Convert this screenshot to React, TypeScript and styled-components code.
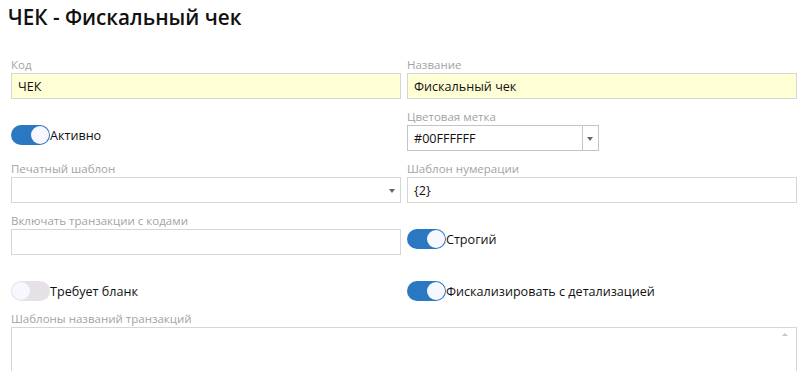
import styled, { createGlobalStyle } from 'styled-components';

const GlobalStyle = createGlobalStyle`
  body {
    margin: 0;
    background: #fff;
    font-family: 'Open Sans', 'Noto Sans', sans-serif;
    color: #111;
  }
`;

const Page = styled.div`
  width: 805px;
  height: 371px;
  overflow: hidden;
  box-sizing: border-box;
`;

const Title = styled.h1`
  margin: 0;
  padding: 4px 8px 0;
  height: 57px;
  box-sizing: border-box;
  font-size: 20.7px;
  font-weight: 600;
  line-height: 27px;
  color: #111;
`;

const Form = styled.div`
  display: grid;
  grid-template-columns: 390px 390px;
  column-gap: 6px;
  row-gap: 10px;
  padding: 0 8px 0 11px;
`;

const Field = styled.div<{ $wide?: boolean }>`
  display: flex;
  flex-direction: column;
  grid-column: ${(p) => (p.$wide ? '1 / -1' : 'auto')};
`;

const Label = styled.label`
  font-size: 11.5px;
  line-height: 16px;
  color: #a3a3a3;
  white-space: nowrap;
`;

const Input = styled.div<{ $filled?: boolean }>`
  position: relative;
  height: 26px;
  box-sizing: border-box;
  border: 1px solid #d6d6d6;
  background: ${(p) => (p.$filled ? '#ffffd6' : '#fff')};
  display: flex;
  align-items: center;
  padding: 0 6px;
  font-size: 12.6px;
  color: #111;
`;

const Arrow = styled.span`
  position: absolute;
  right: 5px;
  top: 11px;
  width: 0;
  height: 0;
  border-left: 3px solid transparent;
  border-right: 3px solid transparent;
  border-top: 4px solid #666;
`;

const ColorPicker = styled.div`
  display: flex;
  width: 192px;
  height: 26px;
  box-sizing: border-box;
  border: 1px solid #c4c4c4;
`;

const ColorValue = styled.div`
  flex: 1;
  display: flex;
  align-items: center;
  padding: 0 6px;
  font-size: 12.6px;
  color: #111;
`;

const ColorButton = styled.div`
  position: relative;
  width: 15px;
  border-left: 1px solid #c4c4c4;
`;

const ToggleRow = styled.div`
  display: flex;
  align-items: center;
  padding-top: 16px;
  height: 20px;
  font-size: 12.6px;
  color: #111;
`;

const Track = styled.span<{ $on?: boolean }>`
  position: relative;
  width: 39px;
  height: 20px;
  border-radius: 10px;
  background: ${(p) => (p.$on ? '#2b78c2' : '#e6e1e6')};
  flex-shrink: 0;
`;

const Knob = styled.span<{ $on?: boolean }>`
  position: absolute;
  top: 1px;
  left: ${(p) => (p.$on ? '20px' : '1px')};
  width: 18px;
  height: 18px;
  border-radius: 50%;
  background: #f7f7ff;
`;

const TextArea = styled.div`
  position: relative;
  height: 60px;
  box-sizing: border-box;
  border: 1px solid #d6d6d6;
  background: #fff;
`;

const ScrollUp = styled.span`
  position: absolute;
  right: 8px;
  top: 5px;
  width: 0;
  height: 0;
  border-left: 3px solid transparent;
  border-right: 3px solid transparent;
  border-bottom: 3px solid #c8c8c8;
`;

const Toggle = ({ on, label }: { on?: boolean; label: string }) => (
  <ToggleRow>
    <Track $on={on}>
      <Knob $on={on} />
    </Track>
    <span>{label}</span>
  </ToggleRow>
);

export default function App() {
  return (
    <Page>
      <GlobalStyle />
      <Title>ЧЕК - Фискальный чек</Title>
      <Form>
        <Field>
          <Label>Код</Label>
          <Input $filled>ЧЕК</Input>
        </Field>
        <Field>
          <Label>Название</Label>
          <Input $filled>Фискальный чек</Input>
        </Field>

        <Toggle on label="Активно" />
        <Field>
          <Label>Цветовая метка</Label>
          <ColorPicker>
            <ColorValue>#00FFFFFF</ColorValue>
            <ColorButton>
              <Arrow />
            </ColorButton>
          </ColorPicker>
        </Field>

        <Field>
          <Label>Печатный шаблон</Label>
          <Input>
            <Arrow />
          </Input>
        </Field>
        <Field>
          <Label>Шаблон нумерации</Label>
          <Input>{'{2}'}</Input>
        </Field>

        <Field>
          <Label>Включать транзакции с кодами</Label>
          <Input />
        </Field>
        <Toggle on label="Строгий" />

        <Toggle label="Требует бланк" />
        <Toggle on label="Фискализировать с детализацией" />

        <Field $wide>
          <Label>Шаблоны названий транзакций</Label>
          <TextArea>
            <ScrollUp />
          </TextArea>
        </Field>
      </Form>
    </Page>
  );
}
